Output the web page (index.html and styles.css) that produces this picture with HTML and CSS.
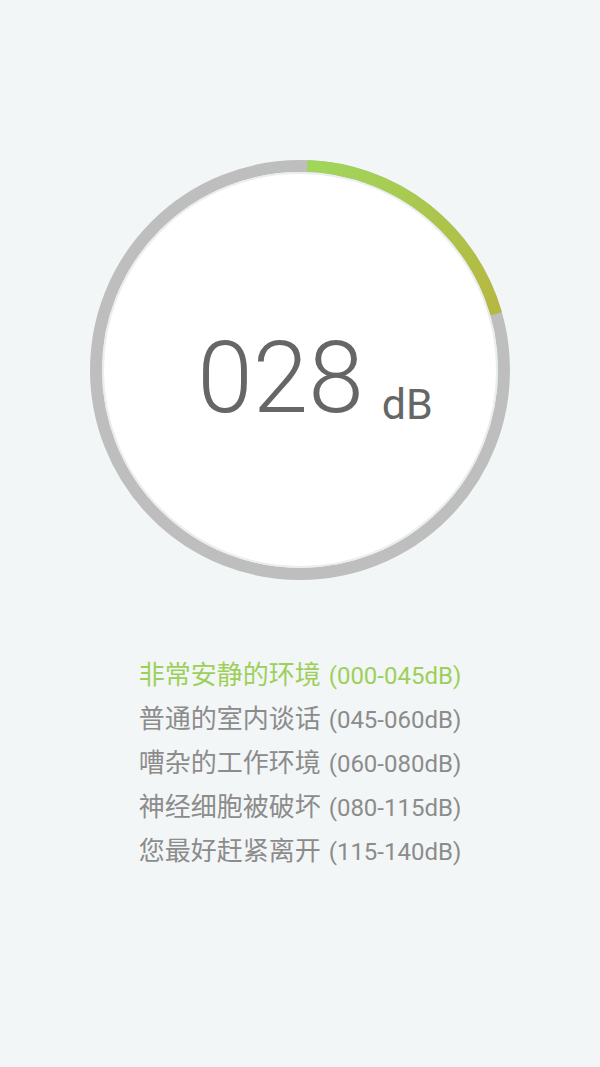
FILE: index.html
```html
<!DOCTYPE html>
<html lang="zh-CN">
<head>
    <meta charset="UTF-8">
    <meta name="viewport" content="width=device-width, initial-scale=1.0">
    <title>分贝仪</title>
    <link rel="stylesheet" href="styles.css">
</head>
<body>

    <div class="gauge">
        <svg class="ring" width="420" height="420" viewBox="0 0 420 420">
            <defs>
                <linearGradient id="arcGradient" gradientUnits="userSpaceOnUse" x1="217" y1="6" x2="406" y2="154">
                    <stop offset="0%" stop-color="#a0d65c"/>
                    <stop offset="100%" stop-color="#b6b840"/>
                </linearGradient>
            </defs>
            <circle cx="210" cy="210" r="204" fill="none" stroke="#bebebe" stroke-width="12"/>
            <!-- 028 / 140 dB = 72 degrees -->
            <path d="M217.1 6.1 A204 204 0 0 1 406.1 153.8" fill="none" stroke="url(#arcGradient)" stroke-width="12"/>
        </svg>
        <div class="face">
            <div class="readout"><span class="value">028</span><span class="unit">dB</span></div>
        </div>
    </div>

    <ul class="levels">
        <li class="level active"><span class="label">非常安静的环境</span> <span class="range">(000-045dB)</span></li>
        <li class="level"><span class="label">普通的室内谈话</span> <span class="range">(045-060dB)</span></li>
        <li class="level"><span class="label">嘈杂的工作环境</span> <span class="range">(060-080dB)</span></li>
        <li class="level"><span class="label">神经细胞被破坏</span> <span class="range">(080-115dB)</span></li>
        <li class="level"><span class="label">您最好赶紧离开</span> <span class="range">(115-140dB)</span></li>
    </ul>

</body>
</html>
```

FILE: styles.css
```css
/* Page */
body {
    margin: 0;
    min-height: 100vh;
    background: #f3f6f7;
    font-family: Roboto, "Noto Sans CJK SC", sans-serif;
    color: #8c8c8c;
    display: flex;
    flex-direction: column;
    align-items: center;
    overflow: hidden;
}

/* Gauge */
.gauge {
    position: relative;
    width: 420px;
    height: 420px;
    margin-top: 160px;
}

.ring {
    display: block;
}

.face {
    position: absolute;
    top: 12px;
    left: 12px;
    width: 396px;
    height: 396px;
    box-sizing: border-box;
    border-radius: 50%;
    border: 2px solid #e9eef0;
    background: #fff;
    display: flex;
    align-items: center;
    justify-content: center;
}

.readout {
    color: #666;
    white-space: nowrap;
    margin-left: 30px;
    margin-top: 14px;
}

.value {
    font-size: 100px;
    font-weight: 300;
}

.unit {
    font-size: 43px;
    margin-left: 18px;
    vertical-align: -7px;
}

/* Level list */
.levels {
    list-style: none;
    margin: 73px 0 0;
    padding: 0;
}

.level {
    height: 44px;
    line-height: 44px;
    font-size: 24px;
    word-spacing: 2px;
    white-space: nowrap;
}

.level.active {
    color: #9dd05a;
}

.label {
    font-size: 26px;
}

.range {
    font-size: 24px;
}
```
